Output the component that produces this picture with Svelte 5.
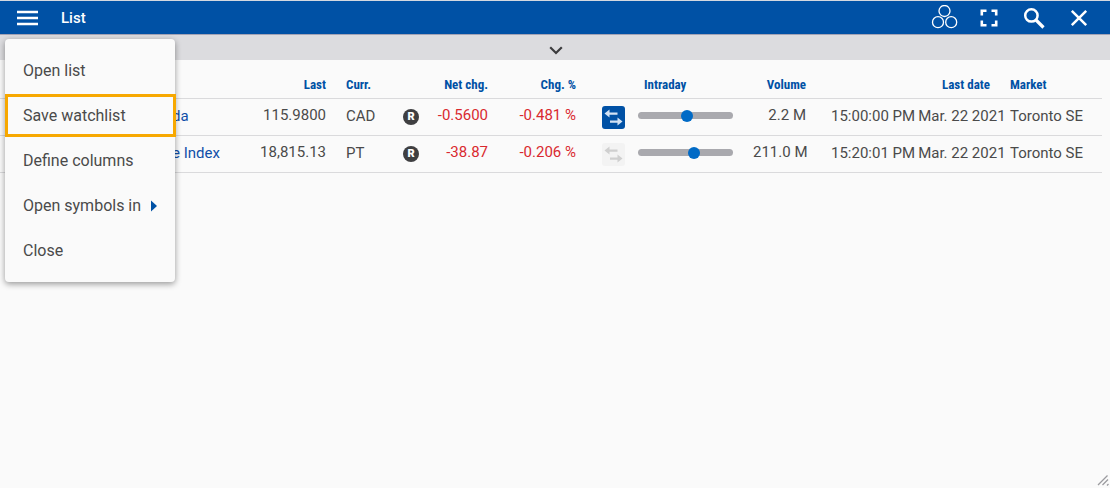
<script>
  const menu = ['Open list', 'Save watchlist', 'Define columns', 'Open symbols in', 'Close'];

  let selected = $state('Save watchlist');

  const rows = $state([
    {
      name: 'da', last: '115.9800', curr: 'CAD', net: '-0.5600', pct: '-0.481 %',
      tradable: true, intraday: 52, volume: '2.2 M', time: '15:00:00 PM', date: 'Mar. 22 2021', market: 'Toronto SE'
    },
    {
      name: 'e Index', last: '18,815.13', curr: 'PT', net: '-38.87', pct: '-0.206 %',
      tradable: false, intraday: 60, volume: '211.0 M', time: '15:20:01 PM', date: 'Mar. 22 2021', market: 'Toronto SE'
    }
  ]);
</script>

<div class="window">
  <header class="bar">
    <button class="burger" aria-label="Menu">
      <svg width="22" height="16" viewBox="0 0 22 16"><path d="M0 2h21M0 8h21M0 14h21" stroke="#fff" stroke-width="2.4" /></svg>
    </button>
    <h1>List</h1>
    <div class="tools">
      <button class="icon" aria-label="Link windows">
        <svg width="28" height="26" viewBox="0 0 28 26" fill="none" stroke="#fff" stroke-width="1.3">
          <circle cx="14.500" cy="6" r="5.5" /><circle cx="8" cy="17.2" r="5.5" /><circle cx="21.2" cy="17.2" r="5.5" />
        </svg>
      </button>
      <button class="icon" aria-label="Full screen">
        <svg width="18" height="18" viewBox="0 0 18 18" fill="none" stroke="#fff" stroke-width="2.6">
          <path d="M1.800 6.500V1.800h4.700M11.500 1.800h4.700v4.700M16.200 11.500v4.700h-4.700M6.500 16.200H1.800v-4.700" />
        </svg>
      </button>
      <button class="icon" aria-label="Search">
        <svg width="22" height="22" viewBox="0 0 22 22" fill="none" stroke="#fff">
          <circle cx="8.4" cy="8.4" r="6.2" stroke-width="2.5" /><path d="M13 13l7.500 7.500" stroke-width="3.2" />
        </svg>
      </button>
      <button class="icon" aria-label="Close window">
        <svg width="18" height="18" viewBox="0 0 18 18"><path d="M1.8 1.8l14.4 14.4M16.2 1.8L1.8 16.2" stroke="#fff" stroke-width="2.5" /></svg>
      </button>
    </div>
  </header>

  <button class="expander" aria-label="Expand panel">
    <svg width="14" height="9" viewBox="0 0 14 9"><path d="M1.200 1.200L7 7l5.800-5.800" fill="none" stroke="#3c3c3e" stroke-width="2.2" /></svg>
  </button>

  <main>
    <table>
      <colgroup>
        <col /><col class="c-last" /><col class="c-curr" /><col class="c-flag" /><col class="c-net" /><col class="c-pct" />
        <col class="c-trade" /><col class="c-intra" /><col class="c-vol" /><col class="c-date" /><col class="c-market" />
      </colgroup>
      <thead>
        <tr>
          <th></th>
          <th class="num">Last</th>
          <th>Curr.</th>
          <th></th>
          <th class="num">Net chg.</th>
          <th class="num">Chg. %</th>
          <th></th>
          <th>Intraday</th>
          <th class="num">Volume</th>
          <th class="num">Last date</th>
          <th>Market</th>
        </tr>
      </thead>
      <tbody>
        {#each rows as row}
          <tr>
            <td class="name"><a href="#quote">{row.name}</a></td>
            <td class="num">{row.last}</td>
            <td>{row.curr}</td>
            <td class="flag"><span class="badge">R</span></td>
            <td class="num down">{row.net}</td>
            <td class="num down">{row.pct}</td>
            <td class="trade">
              <button class="swap" class:off={!row.tradable} disabled={!row.tradable} aria-label="Trade">
                <svg width="23" height="23" viewBox="0 0 23 23" fill="currentColor">
                  <path d="M2.500 7.500L7.500 3.500v3h8v2.200h-8v2.800zM20.500 15.500L15.500 11.500v3H8v2.200h7.500v2.800z" />
                </svg>
              </button>
            </td>
            <td class="intra"><input type="range" min="0" max="100" bind:value={row.intraday} aria-label="Intraday range" /></td>
            <td class="num">{row.volume}</td>
            <td class="date"><div class="stamp"><span>{row.time}</span><span>{row.date}</span></div></td>
            <td>{row.market}</td>
          </tr>
        {/each}
      </tbody>
    </table>
  </main>

  <nav class="menu" aria-label="List menu">
    {#each menu as item}
      <button class:selected={item === selected} onclick={() => (selected = item)}>
        {item}
        {#if item === 'Open symbols in'}
          <svg width="6" height="12" viewBox="0 0 6 12"><path d="M0 .5L6 6 0 11.500z" fill="#0051a5" /></svg>
        {/if}
      </button>
    {/each}
  </nav>

  <svg class="grip" width="12" height="12" viewBox="0 0 12 12"><path d="M1 11L10.500 1.500M5.500 11L11 5.500M10 11.500l1.500-1.500" stroke="#9b9b9f" stroke-width="1.3" /></svg>
</div>

<style>
  :global(body) {
    background: #fafafa;
  }
  .window {
    position: relative;
    display: flex;
    flex-direction: column;
    min-height: 100vh;
    box-sizing: border-box;
    border-top: 1px solid #d3d8e0;
    background: #fafafa;
    color: #4a4a4a;
    font: 15px/20px Roboto, sans-serif;
  }
  button {
    font: inherit;
    color: inherit;
    border: 0;
    padding: 0;
    background: none;
    cursor: pointer;
  }
  svg {
    display: block;
    flex-shrink: 0;
  }
  .bar {
    display: flex;
    align-items: center;
    height: 33px;
    padding: 0 16px;
    background: #0051a5;
    border-bottom: 1px solid #a3a3b5;
  }
  h1 {
    margin: 0 0 0 21px;
    color: #fff;
    font-size: 15px;
    font-weight: 500;
    line-height: 20px;
  }
  .icon,
  .burger {
    display: flex;
    align-items: center;
    justify-content: center;
    width: 28px;
    height: 32px;
  }
  .burger {
    width: 24px;
  }
  .tools {
    display: flex;
    gap: 17px;
    margin-left: auto;
    padding-right: 1px;
  }
  .expander {
    display: flex;
    justify-content: center;
    align-items: center;
    height: 25px;
    padding: 6px 0 0 2px;
    background: #dcdcdf;
  }
  main {
    flex: 1;
    padding-right: 8px;
  }
  table {
    width: 100%;
    table-layout: fixed;
    border-collapse: separate;
    border-spacing: 0;
  }
  .c-last { width: 96px; }
  .c-curr { width: 60px; }
  .c-flag { width: 30px; }
  .c-net { width: 72px; }
  .c-pct { width: 88px; }
  .c-trade { width: 48px; }
  .c-intra { width: 109px; }
  .c-vol { width: 73px; }
  .c-date { width: 184px; }
  .c-market { width: 102px; }
  th,
  td {
    box-sizing: border-box;
    height: 37px;
    padding: 0 10px 2px;
    border-bottom: 1px solid #dadadc;
    text-align: left;
    white-space: nowrap;
    vertical-align: middle;
  }
  th {
    height: 39px;
    padding: 12px 10px 0;
    color: #0051a5;
    font: bold 13px/16px "Roboto Condensed", Roboto, sans-serif;
  }
  .num {
    text-align: right;
  }
  td.num,
  td.intra {
    padding-bottom: 4px;
  }
  td.down {
    color: #d9292f;
  }
  td.name {
    padding-left: 172px;
    padding-right: 0;
  }
  a {
    color: #0f4fa8;
    text-decoration: none;
  }
  td.flag {
    padding: 0 7px;
  }
  .badge {
    display: block;
    width: 16px;
    height: 16px;
    border-radius: 50%;
    background: #3f3f41;
    color: #fff;
    font-size: 11px;
    font-weight: 900;
    line-height: 16px;
    text-align: center;
  }
  td.trade {
    padding: 0 9px 0 16px;
  }
  .swap {
    display: block;
    border-radius: 3px;
    background: #0051a5;
    color: #d3e3f5;
  }
  .swap.off {
    background: #f3f3f3;
    color: #cfcfcf;
  }
  td.intra {
    padding-left: 4px;
  }
  input {
    display: block;
    appearance: none;
    width: 100%;
    height: 12px;
    margin: 0;
    background: none;
  }
  input::-webkit-slider-runnable-track {
    height: 7px;
    border-radius: 4px;
    background: #a9a9ae;
  }
  input::-webkit-slider-thumb {
    appearance: none;
    width: 12px;
    height: 12px;
    margin-top: -2px;
    border-radius: 50%;
    background: #006ac6;
  }
  td.date {
    padding-left: 15px;
    padding-right: 0;
  }
  .stamp {
    display: flex;
    gap: 3px;
  }
  .menu {
    position: absolute;
    top: 38px;
    left: 5px;
    width: 170px;
    padding: 10px 0 8px;
    box-sizing: border-box;
    border-radius: 4px;
    background: #fafafa;
    box-shadow: 0 2px 6px rgba(0, 0, 0, 0.4);
    font-size: 16px;
  }
  .menu button {
    display: flex;
    align-items: center;
    gap: 10px;
    box-sizing: border-box;
    width: 171px;
    height: 43px;
    margin-bottom: 2px;
    padding: 0 15px;
    border: 3px solid transparent;
    white-space: nowrap;
  }
  .menu .selected {
    border-color: #f7a800;
  }
  .grip {
    position: absolute;
    right: 1px;
    bottom: 2px;
  }
</style>
